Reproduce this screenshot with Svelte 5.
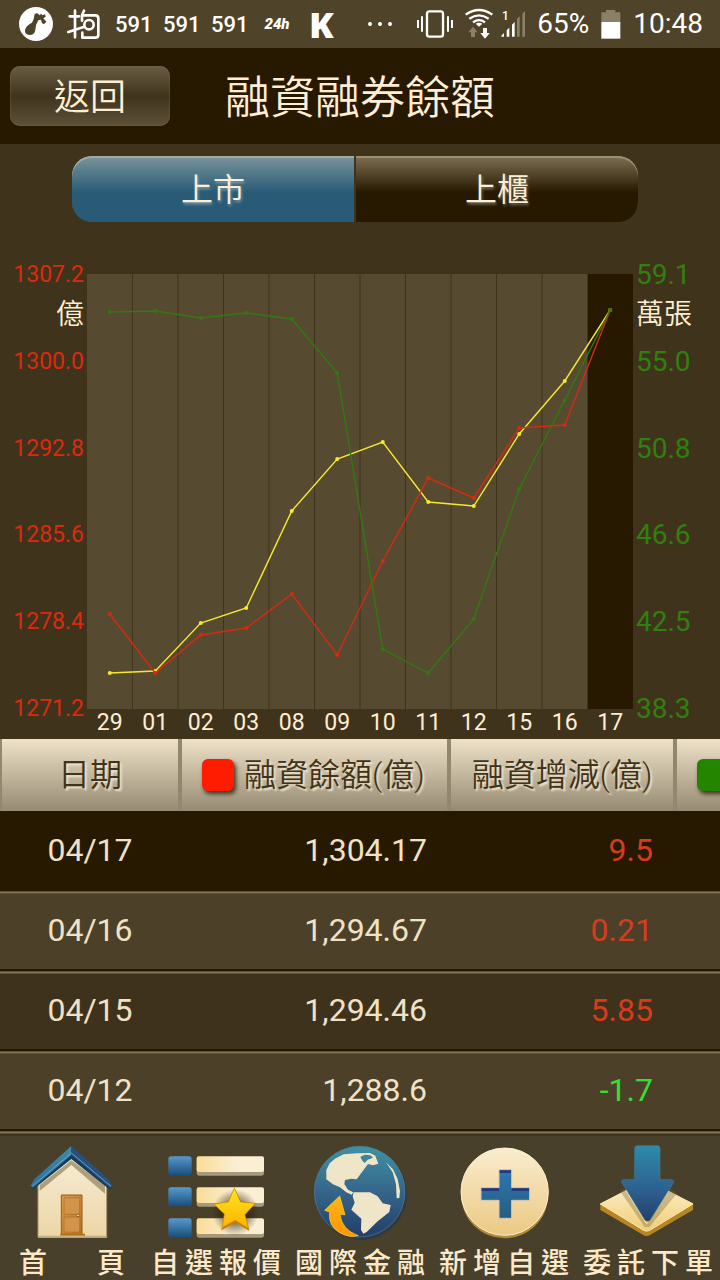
<script lang="ts">
	type Row = { date: string; balance: string; change: string };

	const markets = ['上市', '上櫃'];
	let market = $state('上市');

	const days = ['29', '01', '02', '03', '08', '09', '10', '11', '12', '15', '16', '17'];
	const leftScale = ['1307.2', '1300.0', '1292.8', '1285.6', '1278.4', '1271.2'];
	const rightScale = ['59.1', '55.0', '50.8', '46.6', '42.5', '38.3'];

	// plot units, 0 is the top of the chart
	const STEP = 45.5;
	const HEIGHT = 435;
	const series = [
		{ name: 'index', ys: [399, 397, 349, 334, 237, 185, 168, 228, 232, 160, 107, 36] },
		{ name: 'margin', ys: [340, 399, 361, 354, 320, 381, 287, 204, 224, 154, 151, 36] },
		{ name: 'short', ys: [38, 37, 44, 39, 45, 99, 375, 399, 345, 215, 126, 36] }
	];

	const rows: Row[] = [
		{ date: '04/17', balance: '1,304.17', change: '9.5' },
		{ date: '04/16', balance: '1,294.67', change: '0.21' },
		{ date: '04/15', balance: '1,294.46', change: '5.85' },
		{ date: '04/12', balance: '1,288.6', change: '-1.7' }
	];

	const tabs = [
		{ id: 'home', label: '首頁' },
		{ id: 'favorites', label: '自選報價' },
		{ id: 'global', label: '國際金融' },
		{ id: 'add', label: '新增自選' },
		{ id: 'order', label: '委託下單' }
	];

	const px = (i: number) => STEP / 2 + i * STEP;
	const points = (ys: number[]) => ys.map((y, i) => `${px(i)},${y}`).join(' ');
</script>

<div class="screen">
	<div class="status">
		<div class="status-group">
			<svg width="34" height="48" viewBox="57 0 102 144">
				<circle cx="108" cy="72" r="51" fill="#fff" />
				<path
					d="M104 42q10-6 14 4l6-5 3 5 8-3 2 7-7 5 9 10-7 8-6-4-3-10-8 2q-8 12-9 28-2 16-17 16-16-1-14-15 3-14 21-22 6-9 8-26z"
					fill="#4f432a"
				/>
			</svg>
			<svg width="34" height="48" viewBox="201 0 102 144">
				<g fill="none" stroke="#fff" stroke-width="8" stroke-linecap="round" stroke-linejoin="round">
					<path d="M225 32V112M209 49H237M205 96L253 80M252 32L246 46V62M246 46H286Q295 46 295 55V104Q295 113 286 113H247V98" />
					<circle cx="267" cy="74" r="14" />
				</g>
			</svg>
			<span class="brand">591</span>
			<span class="brand">591</span>
			<span class="brand">591</span>
			<span class="hours">24h</span>
			<span class="letter">K</span>
		</div>
		<div class="status-group right">
			<svg width="40" height="48" viewBox="12 0 120 144" fill="#fff">
				<circle cx="27" cy="72" r="6" />
				<circle cx="57" cy="72" r="6" />
				<circle cx="87" cy="72" r="6" />
			</svg>
			<svg width="36" height="48" viewBox="168 0 108 144">
				<rect x="198" y="34" width="48" height="76" rx="7" fill="none" stroke="#fff" stroke-width="7" />
				<path d="M171 60V84M183 49V95M261 49V95M273 60V84" stroke="#fff" stroke-width="6" />
			</svg>
			<svg width="60" height="48" viewBox="318 0 180 144">
				<g fill="none" stroke="#fff" stroke-width="7">
					<path d="M320 44Q360 16 400 44M331 56Q360 36 389 56M342 67Q360 54 378 67" />
				</g>
				<path d="M350 71q10-6 20 0l-10 9z" fill="#fff" />
				<path d="M342 80l14 17h-8v14h-12v-14h-8z" fill="#8a8068" />
				<path d="M372 84h12v15h8l-14 17-14-17h8z" fill="#fff" />
				<text x="429" y="60" class="sim">1</text>
				<path d="M427 110v-3l8-8v11zM443 110V91l8-8v27zM459 110V74l8-8v44z" fill="#fff" />
				<path d="M474 110V57l8-8v61zM490 110V41l8-8v77z" fill="#8a8068" />
			</svg>
			<span class="clock">65%</span>
			<svg width="20" height="48" viewBox="730 0 60 144">
				<path d="M731 37h14v-7h28v7h15v30h-57z" fill="#8a8068" />
				<path d="M731 66h57v50h-57z" fill="#fff" />
			</svg>
			<span class="clock">10:48</span>
		</div>
	</div>

	<header>
		<button class="back" type="button">返回</button>
		<h1>融資融券餘額</h1>
	</header>

	<main>
		<div class="markets">
			{#each markets as name}
				<button type="button" class:active={market === name} onclick={() => (market = name)}>{name}</button>
			{/each}
		</div>

		<div class="chart">
			<div class="axis left">
				{#each leftScale as value, i}
					<div>
						<div>{value}</div>
						{#if i === 0}<div class="unit">億</div>{/if}
					</div>
				{/each}
			</div>
			<div class="plot">
				<svg viewBox="0 0 546 {HEIGHT}" preserveAspectRatio="none">
					<rect width="546" height={HEIGHT} fill="#564a30" />
					<rect x={STEP * 11} width={STEP} height={HEIGHT} fill="#261900" />
					{#each days.slice(1) as _, i}
						<line x1={STEP * (i + 1)} x2={STEP * (i + 1)} y1="0" y2={HEIGHT} stroke="#40331c" />
					{/each}
					{#each series as line}
						<g class={line.name}>
							<polyline points={points(line.ys)} />
							{#each line.ys as y, i}
								<circle cx={px(i)} cy={y} r="2" />
							{/each}
						</g>
					{/each}
				</svg>
				<div class="days">
					{#each days as day}
						<span>{day}</span>
					{/each}
				</div>
			</div>
			<div class="axis">
				{#each rightScale as value, i}
					<div>
						<div>{value}</div>
						{#if i === 0}<div class="unit">萬張</div>{/if}
					</div>
				{/each}
			</div>
		</div>

		<table>
			<colgroup>
				<col class="c-date" />
				<col class="c-balance" />
				<col class="c-change" />
				<col />
			</colgroup>
			<thead>
				<tr>
					<th>日期</th>
					<th><div class="legend"><i class="swatch"></i>融資餘額(億)</div></th>
					<th>融資增減(億)</th>
					<th><div class="legend"><i class="swatch green"></i></div></th>
				</tr>
			</thead>
			<tbody>
				{#each rows as row}
					<tr>
						<td class="date">{row.date}</td>
						<td>{row.balance}</td>
						<td class={row.change.startsWith('-') ? 'down' : 'up'}>{row.change}</td>
						<td></td>
					</tr>
				{/each}
			</tbody>
		</table>
		<div class="more"></div>
	</main>

	<nav>
		{#each tabs as tab}
			<a href="#{tab.id}">
				{#if tab.id === 'home'}
					<svg viewBox="72 40 288 300">
						<defs>
							<linearGradient id="wall" x2="0" y2="1">
								<stop offset="0" stop-color="#f6ecd4" />
								<stop offset="1" stop-color="#ecd6a6" />
							</linearGradient>
							<linearGradient id="wood" x2="1" y2="1">
								<stop offset="0" stop-color="#dc9c4c" />
								<stop offset="1" stop-color="#b87424" />
							</linearGradient>
							<linearGradient id="roof" x2="0" y2="1">
								<stop offset="0" stop-color="#3f8cae" />
								<stop offset="1" stop-color="#2d6f98" />
							</linearGradient>
						</defs>
						<path d="M114 158L214 78 320 158V323H114z" fill="url(#wall)" stroke="#a8946a" stroke-width="3" />
						<path d="M119 184V166L214 92 315 166V192L214 106z" fill="#8b7950" opacity=".65" />
						<path d="M114 318H320V324H114z" fill="#c5ae80" />
						<path d="M184 196H246V314H184z" fill="url(#wood)" stroke="#96591a" stroke-width="3" />
						<path d="M192 204H239V254H192zM192 262H239V307H192z" fill="#d2934a" stroke="#ad6c22" stroke-width="2" />
						<path d="M181 312H255V318H181z" fill="#b5701c" />
						<circle cx="234" cy="257" r="4" fill="#f4e3bd" stroke="#674012" stroke-width="2" />
						<path d="M91 170L214 68 338 170 330 180 214 88 98 180z" fill="#173a56" />
						<path d="M91 169L103 149 214 49V76L99 174z" fill="url(#roof)" />
						<path d="M338 169L326 149 214 49V76L330 174z" fill="#2a5080" />
						<path d="M96 170L214 70 333 170" fill="none" stroke="#61a2c0" stroke-width="3" />
					</svg>
				{:else if tab.id === 'favorites'}
					<svg viewBox="504 40 288 300">
						<defs>
							<linearGradient id="bullet" x2="0" y2="1">
								<stop offset="0" stop-color="#5799cd" />
								<stop offset="1" stop-color="#194e7a" />
							</linearGradient>
							<linearGradient id="bar">
								<stop offset="0" stop-color="#f9dc97" />
								<stop offset=".6" stop-color="#fbefd3" />
							</linearGradient>
							<linearGradient id="star" x2="0" y2="1">
								<stop offset="0" stop-color="#ffe51e" />
								<stop offset="1" stop-color="#fbb000" />
							</linearGradient>
							<radialGradient id="shade">
								<stop offset=".4" stop-color="#241800" stop-opacity=".6" />
								<stop offset="1" stop-color="#241800" stop-opacity="0" />
							</radialGradient>
						</defs>
						{#each [80, 173, 266] as y}
							<rect x="505" {y} width="70" height="57" rx="8" fill="url(#bullet)" />
							<rect x="590" y={y + 4} width="202" height="54" rx="7" fill="#a69a7d" />
							<rect x="590" {y} width="202" height="47" rx="6" fill="url(#bar)" />
						{/each}
						<ellipse cx="706" cy="248" rx="70" ry="70" fill="url(#shade)" />
						<path
							d="M703 175L722 217 766 221 735 255 747 302 706 277 665 300 673 253 641 223 685 217z"
							fill="url(#star)"
							stroke="#bd7d05"
							stroke-width="2"
						/>
						<path d="M665 300L706 277 747 302 744 295 706 271 669 292z" fill="#cf7a05" />
					</svg>
				{:else if tab.id === 'global'}
					<svg viewBox="66 40 288 300">
						<defs>
							<linearGradient id="sea" x2="0" y2="1">
								<stop offset="0" stop-color="#3f91a4" />
								<stop offset=".45" stop-color="#376a8d" />
								<stop offset="1" stop-color="#233e68" />
							</linearGradient>
							<linearGradient id="flame" x2="0" y2="1">
								<stop offset="0" stop-color="#ffb51b" />
								<stop offset="1" stop-color="#ff9500" />
							</linearGradient>
						</defs>
						<circle cx="214" cy="194" r="137" fill="#1d3450" opacity=".55" />
						<circle cx="209" cy="186" r="136" fill="url(#sea)" stroke="#4d7ea0" stroke-width="2" />
						<path
							d="M135 87L161 74 200 71 240 70 256 78 265 102 249 107 234 103 200 149 184 147 165 151 163 163 174 180 190 188 185 195 169 188 150 173 129 164 109 149 109 121 119 101z"
							fill="#efe5c8"
						/>
						<path d="M211 81L225 75 241 77 249 84 233 90 224 100 216 92z" fill="#3f839a" />
						<path d="M191 188L240 188 263 200 278 221 302 226 298 247 263 275 230 307 220 312 213 301 214 267 184 240 194 219 188 200z" fill="#efe5c8" />
						<path d="M288 98L309 119 323 148 330 184 328 205 320 206 318 164 308 128z" fill="#efe5c8" />
						<path
							d="M149 199L165 255 150 254Q155 300 205 318Q176 325 149 309 113 287 119 247L104 242z"
							fill="url(#flame)"
							stroke="#ffe027"
							stroke-width="2"
						/>
					</svg>
				{:else if tab.id === 'add'}
					<svg viewBox="498 40 288 300">
						<defs>
							<linearGradient id="coin" x2="0" y2="1">
								<stop offset="0" stop-color="#faecce" />
								<stop offset="1" stop-color="#ebc983" />
							</linearGradient>
							<linearGradient id="plus" x2="0" y2="1">
								<stop offset="0" stop-color="#2d77b1" />
								<stop offset="1" stop-color="#255d80" />
							</linearGradient>
						</defs>
						<circle cx="644" cy="195" r="131" fill="#b08b38" />
						<circle cx="644" cy="186" r="131" fill="url(#coin)" stroke="#fff0d3" stroke-width="3" />
						<path
							d="M627 120H665V174H719V212H665V266H627V212H573V174H627z"
							fill="url(#plus)"
							stroke="#d5cab9"
							stroke-width="3"
						/>
						<path d="M629 122H663V130H629zM575 176H627V184H575zM665 176H717V184H665z" fill="#25387c" />
					</svg>
				{:else}
					<svg viewBox="120 40 288 300">
						<defs>
							<linearGradient id="arrow" x2="0" y2="1">
								<stop offset="0" stop-color="#2f8ba8" />
								<stop offset=".6" stop-color="#2d5f8e" />
								<stop offset="1" stop-color="#223f6c" />
							</linearGradient>
							<linearGradient id="tile" x2="0" y2="1">
								<stop offset="0" stop-color="#fdf3cf" />
								<stop offset="1" stop-color="#f0cd77" />
							</linearGradient>
						</defs>
						<path d="M121 221L260 155 399 221V241L270 316Q260 322 250 316L121 241z" fill="#b78622" />
						<path d="M121 223L260 150 399 223 269 302Q260 307 251 302z" fill="url(#tile)" stroke="#fae9b6" stroke-width="3" />
						<path d="M192 176L260 285 332 177 352 190 268 292 254 292 180 184z" fill="#76612c" opacity=".35" />
						<path
							d="M233 48H292Q300 48 300 57V150H334Q344 151 339 161L271 270Q263 280 254 270L187 161Q181 151 193 150H224V57Q224 48 233 48z"
							fill="url(#arrow)"
							stroke="#377f9f"
							stroke-width="2"
						/>
					</svg>
				{/if}
				<span class="tab-label" class:short-label={tab.label.length === 2}>{tab.label}</span>
			</a>
		{/each}
	</nav>
</div>

<style>
	:global(body) {
		background: #40331c;
	}
	.screen {
		display: flex;
		flex-direction: column;
		min-height: 100vh;
		overflow: hidden;
		font-family: Roboto, 'Noto Sans CJK TC', sans-serif;
		color: #ffeed6;
	}
	button {
		font: inherit;
		color: inherit;
		border: 0;
		padding: 0;
	}

	.status {
		display: flex;
		justify-content: space-between;
		height: 48px;
		padding: 0 17px 0 19px;
		background: #4f432a;
		color: #fff;
	}
	.status-group {
		display: flex;
		align-items: center;
		gap: 14px;
	}
	.right {
		gap: 12px;
	}
	.brand {
		width: 34px;
		font: 500 22px Roboto, sans-serif;
	}
	.hours {
		width: 36px;
		text-align: center;
		font: italic 900 15px Roboto, sans-serif;
	}
	.letter {
		font: 800 36px 'Open Sans', sans-serif;
	}
	.clock {
		font-size: 28px;
		font-weight: 450;
		line-height: 50px;
	}
	.sim {
		font: 500 36px Roboto, sans-serif;
		fill: #fff;
	}

	header {
		display: grid;
		grid-template-columns: 1fr auto 1fr;
		align-items: center;
		height: 96px;
		padding: 0 10px;
		background: #261900;
	}
	.back {
		justify-self: start;
		width: 160px;
		height: 60px;
		padding-bottom: 4px;
		border-radius: 10px;
		background: linear-gradient(#695d43, #40331c 50%, #5d5138);
		box-shadow: inset 0 0 2px #7d7053;
		font-size: 36px;
		font-weight: 350;
	}
	h1 {
		margin: 0;
		padding-bottom: 4px;
		font-size: 45px;
		font-weight: 350;
	}

	main {
		display: flex;
		flex-direction: column;
		flex: 1;
		background: #40331c;
	}
	.markets {
		display: flex;
		gap: 2px;
		margin: 12px 82px 39px 72px;
	}
	.markets button {
		flex: 1;
		height: 66px;
		padding-bottom: 4px;
		background: linear-gradient(#7d7053, #261900 55%);
		box-shadow: inset 0 2px 0 #9c9074;
		text-shadow: 1px 2px 3px #fff6;
		font-size: 32px;
		font-weight: 350;
	}
	.markets button.active {
		background: linear-gradient(#7b959c, #295b76 55%);
		box-shadow: inset 0 2px 0 #a0aba5;
	}
	.markets button:first-child {
		border-radius: 20px 0 0 20px;
	}
	.markets button:last-child {
		border-radius: 0 20px 20px 0;
	}

	.chart {
		display: grid;
		grid-template-columns: 87px 1fr 87px;
	}
	.axis {
		display: grid;
		grid-template-rows: repeat(5, 1fr) 28px;
		height: 462px;
		padding: 0 3px;
		font-size: 28px;
		line-height: 28px;
		color: #31800f;
	}
	.axis.left {
		font-size: 23px;
		text-align: right;
		color: #dc2a0e;
	}
	.axis .unit {
		margin-top: 12px;
		font-size: 28px;
		font-weight: 350;
		color: #ffeed6;
	}
	.plot {
		padding-top: 13px;
	}
	.plot svg {
		display: block;
		width: 100%;
		height: 435px;
	}
	polyline {
		fill: none;
		stroke-width: 1.4;
	}
	.index {
		stroke: #f7e92c;
		fill: #f7e92c;
	}
	.margin {
		stroke: #d52b10;
		fill: #d52b10;
	}
	.short {
		stroke: #33790f;
		fill: #33790f;
	}
	.plot circle {
		stroke-width: 0;
	}
	.days {
		display: grid;
		grid-template-columns: repeat(12, 1fr);
		font-size: 23px;
		line-height: 27px;
		padding-bottom: 3px;
		text-align: center;
	}

	table {
		width: 100%;
		table-layout: fixed;
		border-collapse: separate;
		border-spacing: 0;
		font-size: 32px;
		color: #efe2c6;
	}
	.c-date {
		width: 180px;
	}
	.c-balance {
		width: 269px;
	}
	.c-change {
		width: 226px;
	}
	th {
		height: 72px;
		padding: 0;
		box-sizing: border-box;
		overflow: hidden;
		border: solid #93876d;
		border-width: 0 2px;
		background: linear-gradient(#efe2c9, #958a72);
		font-weight: 350;
		line-height: 40px;
		color: #40331c;
		text-shadow: 2px 2px 2px #f4e6cc;
		white-space: nowrap;
	}
	th:last-child {
		border-right: 0;
	}
	.legend {
		display: flex;
		align-items: center;
		gap: 10px;
		padding-left: 20px;
	}
	.swatch {
		flex: none;
		width: 32px;
		height: 32px;
		border-radius: 6px;
		background: #ff1c00;
		box-shadow: 2px 3px 4px #40331c;
	}
	.green {
		background: #248600;
	}
	td {
		height: 80px;
		box-sizing: border-box;
		padding: 0 22px 2px;
		text-align: right;
		background: #3f321c;
		box-shadow: inset 0 -2px #261900, inset 0 1px #5d5036, inset 0 2px #83765a, inset 0 3px #5d5036;
	}
	tr:nth-child(even) td {
		background: #4c4028;
	}
	tr:first-child td {
		background: #261900;
		box-shadow: none;
	}
	td.date {
		padding: 0 0 2px;
		text-align: center;
	}
	.up {
		color: #d63c1e;
	}
	.down {
		color: #36e032;
	}
	.more {
		flex: 1;
		min-height: 5px;
		box-shadow: inset 0 1px #5d5036, inset 0 2px #83765a, inset 0 3px #5d5036;
	}

	nav {
		display: grid;
		grid-template-columns: repeat(5, 1fr);
		height: 144px;
		background: #48402a;
	}
	nav a {
		display: flex;
		flex-direction: column;
		align-items: center;
		padding-top: 7px;
		color: #fbe9ca;
		text-decoration: none;
	}
	nav svg {
		flex: none;
		width: 96px;
		height: 100px;
	}
	.tab-label {
		width: 130px;
		font-size: 28px;
		font-weight: 500;
		line-height: 42px;
		text-align-last: justify;
	}
	.short-label {
		width: 106px;
	}
</style>
